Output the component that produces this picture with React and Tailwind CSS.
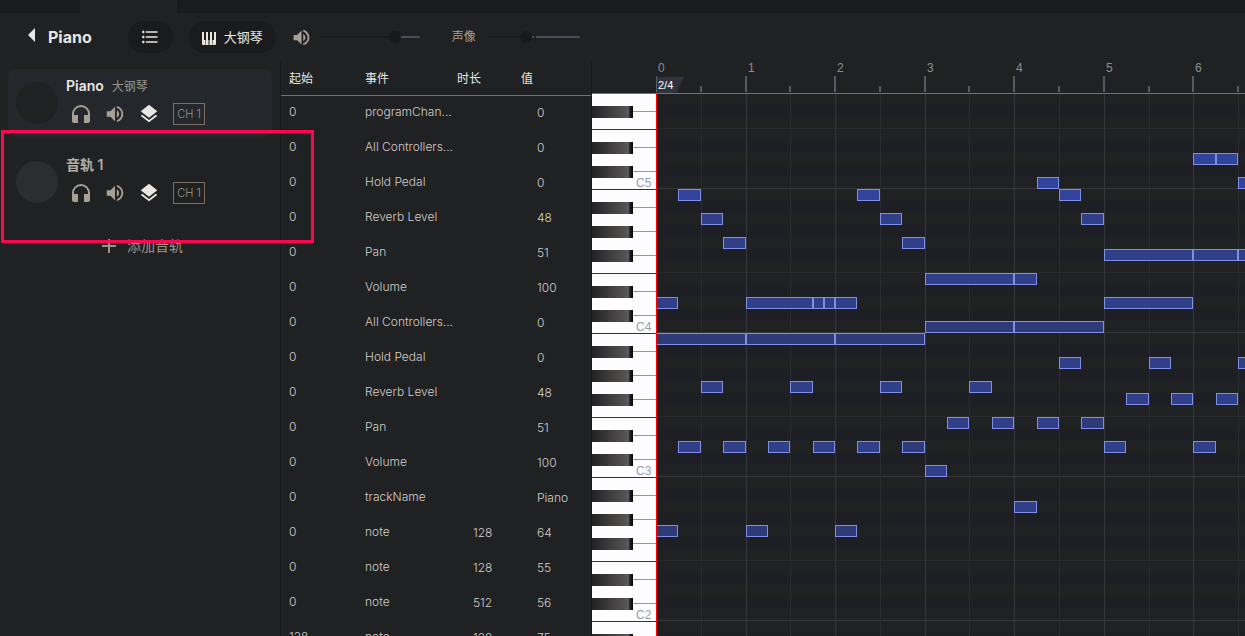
import { MdHeadphones, MdVolumeUp, MdLayers, MdAdd, MdFormatListBulleted } from "react-icons/md";

const EVENTS = [
  ["0", "programChan...", "", "0"],
  ["0", "All Controllers...", "", "0"],
  ["0", "Hold Pedal", "", "0"],
  ["0", "Reverb Level", "", "48"],
  ["0", "Pan", "", "51"],
  ["0", "Volume", "", "100"],
  ["0", "All Controllers...", "", "0"],
  ["0", "Hold Pedal", "", "0"],
  ["0", "Reverb Level", "", "48"],
  ["0", "Pan", "", "51"],
  ["0", "Volume", "", "100"],
  ["0", "trackName", "", "Piano"],
  ["0", "note", "128", "64"],
  ["0", "note", "128", "55"],
  ["0", "note", "512", "56"],
  ["128", "note", "128", "75"],
];

const TRACKS = [
  { name: "Piano", instrument: "大钢琴", selected: true },
  { name: "音轨 1", instrument: "", selected: false },
];

const BRIGHT = "#31439a";
const MID = "#303f87";
const DIM = "#2e3b78";

// [semitone row below the top G, start in sixteenths, length in sixteenths, fill]
const NOTES = [
  [5, 24, 1, BRIGHT], [5, 25, 1, BRIGHT],
  [7, 17, 1, BRIGHT], [7, 26, 1, BRIGHT],
  [8, 1, 1, BRIGHT], [8, 9, 1, BRIGHT], [8, 18, 1, BRIGHT],
  [10, 2, 1, MID], [10, 10, 1, MID], [10, 19, 1, MID],
  [12, 3, 1, MID], [12, 11, 1, MID],
  [13, 20, 4, MID], [13, 24, 2, MID], [13, 26, 4, MID],
  [15, 12, 4, MID], [15, 16, 1, MID],
  [17, 0, 1, MID], [17, 4, 3, MID], [17, 7, 0.5, MID], [17, 7.5, 0.5, MID], [17, 8, 1, MID], [17, 20, 4, MID],
  [19, 12, 4, DIM], [19, 16, 4, DIM],
  [20, 0, 4, DIM], [20, 4, 4, DIM], [20, 8, 4, DIM],
  [22, 18, 1, MID], [22, 22, 1, MID], [22, 26, 1, MID],
  [24, 2, 1, MID], [24, 6, 1, MID], [24, 10, 1, MID], [24, 14, 1, MID],
  [25, 21, 1, MID], [25, 23, 1, MID], [25, 25, 1, MID],
  [27, 13, 1, MID], [27, 15, 1, MID], [27, 17, 1, MID], [27, 19, 1, DIM],
  [29, 1, 1, MID], [29, 3, 1, MID], [29, 5, 1, MID], [29, 7, 1, MID], [29, 9, 1, MID], [29, 11, 1, DIM], [29, 20, 1, MID], [29, 24, 1, MID],
  [31, 12, 1, MID],
  [34, 16, 1, MID],
  [36, 0, 1, DIM], [36, 4, 1, DIM], [36, 8, 1, DIM],
];

const ROW = 12;
const STEP = 22.387;
const ROWS = Array.from({ length: 92 }, (_, i) => ({ i, pitch: (((7 - i) % 12) + 12) % 12 }));
const BLACK = [1, 3, 6, 8, 10];
const BEATS = Array.from({ length: 24 }, (_, i) => i);

const stepX = (s) => Math.round(s * STEP);

function PianoKeys() {
  return (
    <svg className="block h-full w-16 shrink-0 bg-[#fdfdff]" aria-label="琴键">
      <defs>
        <linearGradient id="key" x1="0" x2="1" y1="0" y2="0">
          <stop offset="0" stopColor="#222" />
          <stop offset="0.9" stopColor="#5b5957" />
          <stop offset="0.9" stopColor="#333" />
          <stop offset="1" stopColor="#000" />
        </linearGradient>
      </defs>
      {ROWS.map(({ i, pitch }) => {
        const y = i * ROW;
        if (BLACK.includes(pitch)) {
          return (
            <g key={i}>
              <rect x="0" y={y} width="41" height="12" fill="url(#key)" />
              <rect x="41" y={y + 5} width="23" height="1" fill="#97979b" />
            </g>
          );
        }
        return (
          <g key={i}>
            {(pitch === 0 || pitch === 5) && <rect x="0" y={y + 11} width="64" height="1" fill="#33343d" />}
            {pitch === 0 && (
              <text x="44" y={y + 9} fontSize="12" fill="#989db0" fontFamily="Liberation Sans, sans-serif">
                {`C${5 - (i - 7) / 12}`}
              </text>
            )}
          </g>
        );
      })}
    </svg>
  );
}

function Ruler() {
  return (
    <svg className="block h-full w-full min-w-0 flex-1" aria-label="标尺" fontFamily="Liberation Sans, sans-serif">
      <polygon points="0,16 28,16 20,32 0,32" fill="#30323d" />
      {BEATS.map((b) => (
        <g key={b}>
          <rect x={stepX(b * 4) - (b ? 1 : 0)} y="15" width={b ? 2 : 1} height="16" fill="#555a64" />
          <rect x={stepX(b * 4 + 2) - 1} y="25" width="2" height="6" fill="#555a64" />
          <text x={stepX(b * 4) + 2} y="11" fontSize="12" fill="#8a8e9b">{b}</text>
        </g>
      ))}
      <text x="2" y="28" fontSize="11" fill="#ffffff">2/4</text>
    </svg>
  );
}

function NoteGrid() {
  return (
    <svg className="block h-full w-full min-w-0 flex-1" aria-label="音符">
      {ROWS.map(({ i, pitch }) => (
        <g key={i}>
          {BLACK.includes(pitch) && <rect x="0" y={i * ROW - 1} width="100%" height="12" fill="#1e1f24" />}
          {(pitch === 0 || pitch === 5) && (
            <rect x="0" y={i * ROW + 10} width="100%" height="1" fill={pitch === 0 ? "#36373b" : "#2a2b2e"} />
          )}
        </g>
      ))}
      {BEATS.map((b) => (
        <g key={b}>
          <rect x={stepX(b * 4)} y="0" width="1" height="100%" fill="#36373d" />
          <rect x={stepX(b * 4 + 2)} y="0" width="1" height="100%" fill="#2a2b2e" />
        </g>
      ))}
      {NOTES.map(([row, start, len, fill]) => (
        <rect
          key={`${row}-${start}`}
          x={stepX(start) + 0.5}
          y={row * ROW - 0.5}
          width={stepX(start + len) - stepX(start) - 1}
          height="11"
          fill={fill}
          stroke="#7f8fe6"
        />
      ))}
      <rect x="0" y="0" width="1" height="100%" fill="#ff0000" />
    </svg>
  );
}

function Track({ name, instrument, selected }) {
  return (
    <li className={selected ? "flex h-17 items-center rounded-lg bg-[#24272c] pl-2" : "flex h-17 items-center rounded-lg pl-2"}>
      <span className={selected ? "size-[42px] shrink-0 rounded-full bg-[#202122]" : "size-[42px] shrink-0 rounded-full bg-[#2a2e2f]"} />
      <div className="flex flex-col gap-1.5 pb-1 pl-2">
        <div className="flex items-baseline gap-2 leading-5">
          <span className={selected ? "text-sm font-semibold text-[#e8e6e3]" : "text-sm font-semibold text-[#b2aca2]"}>{name}</span>
          {instrument && <span className="text-xs text-[#9d9488]">{instrument}</span>}
        </div>
        <div className="flex h-6 items-center gap-2.5 pl-[3px] text-[#a8a095]">
          <button className="flex size-6 items-center justify-center" aria-label="独奏"><MdHeadphones size={24} /></button>
          <button className="flex size-6 items-center justify-center" aria-label="静音"><MdVolumeUp size={22} /></button>
          <button className="flex size-6 items-center justify-center text-[#e8e6e3]" aria-label="图层"><MdLayers size={22} /></button>
          <button className="ml-0.5 h-[22px] w-8 border border-[#7b6f61] text-[11px] font-light text-[#9d9488]">CH 1</button>
        </div>
      </div>
    </li>
  );
}

function PianoIcon() {
  return (
    <svg width="14" height="13" viewBox="0 0 14 13" aria-hidden="true">
      <path
        fill="#e8e6e3"
        d="M0 0h2v8h1v5H1a1 1 0 0 1-1-1zM4 0h2v8h.5v5h-3V8H4zM8 0h2v8h.5v5h-3V8H8zM12 0h2v12a1 1 0 0 1-1 1h-2V8h1z"
      />
    </svg>
  );
}

function Slider({ label, value, className, center }) {
  return (
    <div className={`relative flex h-6 items-center ${className}`}>
      <span className="h-0.5 flex-1 rounded-full bg-[#484d5c]" />
      <span className="absolute left-0 h-0.5 bg-[#18191a]" style={{ width: `${value}%` }} />
      {center && <span className="absolute left-1/2 h-0.5 w-0.5 bg-[#202122]" />}
      <span className="absolute size-3 -translate-x-1/2 rounded-full bg-[#18191a]" style={{ left: `${value}%` }} />
      <input
        type="range"
        min="0"
        max="100"
        defaultValue={value}
        aria-label={label}
        className="absolute inset-0 w-full opacity-0"
      />
    </div>
  );
}

export default function App() {
  return (
    <div className="relative flex h-screen flex-col overflow-hidden bg-[#202122] font-[Inter,'Noto_Sans_CJK_SC',sans-serif] text-[#e8e6e3]">
      <div className="flex h-[13px] shrink-0 bg-[#1a1b1c] pl-20">
        <div className="w-[97px] bg-[#202122]" />
      </div>

      <header className="flex h-12 shrink-0 items-center pl-7">
        <button className="flex items-center gap-3" aria-label="返回">
          <svg width="8" height="14" viewBox="0 0 8 14" className="-mt-1">
            <path d="M7 0v14L0 7z" fill="#e8e6e3" />
          </svg>
          <span className="text-base font-bold">Piano</span>
        </button>
        <button className="ml-9 flex h-8 w-[45px] items-center justify-center rounded-full bg-[#1a1b1c]" aria-label="事件列表">
          <MdFormatListBulleted size={20} />
        </button>
        <button className="ml-4 flex h-8 items-center gap-2 rounded-full bg-[#1a1b1c] px-[13px] pt-0.5 text-[13px]">
          <PianoIcon />
          大钢琴
        </button>
        <MdVolumeUp size={21} className="mr-2 ml-[15px] text-[#a8a095]" />
        <Slider label="音量" value={75} className="w-[100px]" />
        <span className="mr-3 ml-8 text-xs text-[#a8a095]">声像</span>
        <Slider label="声像" value={41} className="w-[92px]" center />
      </header>

      <main className="flex min-h-0 flex-1">
        <aside className="w-70 shrink-0 pt-2 pr-2 pl-2">
          <ul className="flex flex-col gap-[11px]">
            {TRACKS.map((t) => (
              <Track key={t.name} {...t} />
            ))}
          </ul>
          <button className="mt-[18px] flex w-full items-center justify-center gap-1.5 text-sm text-[#9d9488]">
            <MdAdd size={24} />
            添加音轨
          </button>
        </aside>

        <section className="w-[312px] shrink-0 overflow-hidden border-x border-[#18191a]">
          <table className="w-full table-fixed text-left text-xs font-light text-[#d3cfc9]">
            <colgroup>
              <col className="w-19" />
              <col className="w-25" />
              <col className="w-14" />
              <col />
            </colgroup>
            <thead>
              <tr className="h-[34px] border-b border-[#7a706a] text-[#e8e6e3]">
                <th className="pt-0.5 pl-2 font-normal">起始</th>
                <th className="pt-0.5 pl-2 font-normal">事件</th>
                <th className="pt-0.5 font-normal">时长</th>
                <th className="pt-0.5 pl-2 font-normal">值</th>
              </tr>
            </thead>
            <tbody>
              {EVENTS.map(([start, type, duration, value], i) => (
                <tr key={i} className="h-[35px]">
                  <td className="pb-0.5 pl-2">{start}</td>
                  <td className="truncate pb-0.5 pl-2">{type}</td>
                  <td className="pl-4">{duration}</td>
                  <td className="pl-6">{value}</td>
                </tr>
              ))}
            </tbody>
          </table>
        </section>

        <section className="flex min-w-0 flex-1 flex-col">
          <div className="flex h-[33px] shrink-0 border-b border-[#7a706a] pl-16">
            <Ruler />
          </div>
          <div className="flex min-h-0 flex-1">
            <PianoKeys />
            <NoteGrid />
          </div>
        </section>
      </main>

      <div className="pointer-events-none absolute top-[130px] left-px h-[113px] w-[313px] border-3 border-[#ff0552]" />
    </div>
  );
}
